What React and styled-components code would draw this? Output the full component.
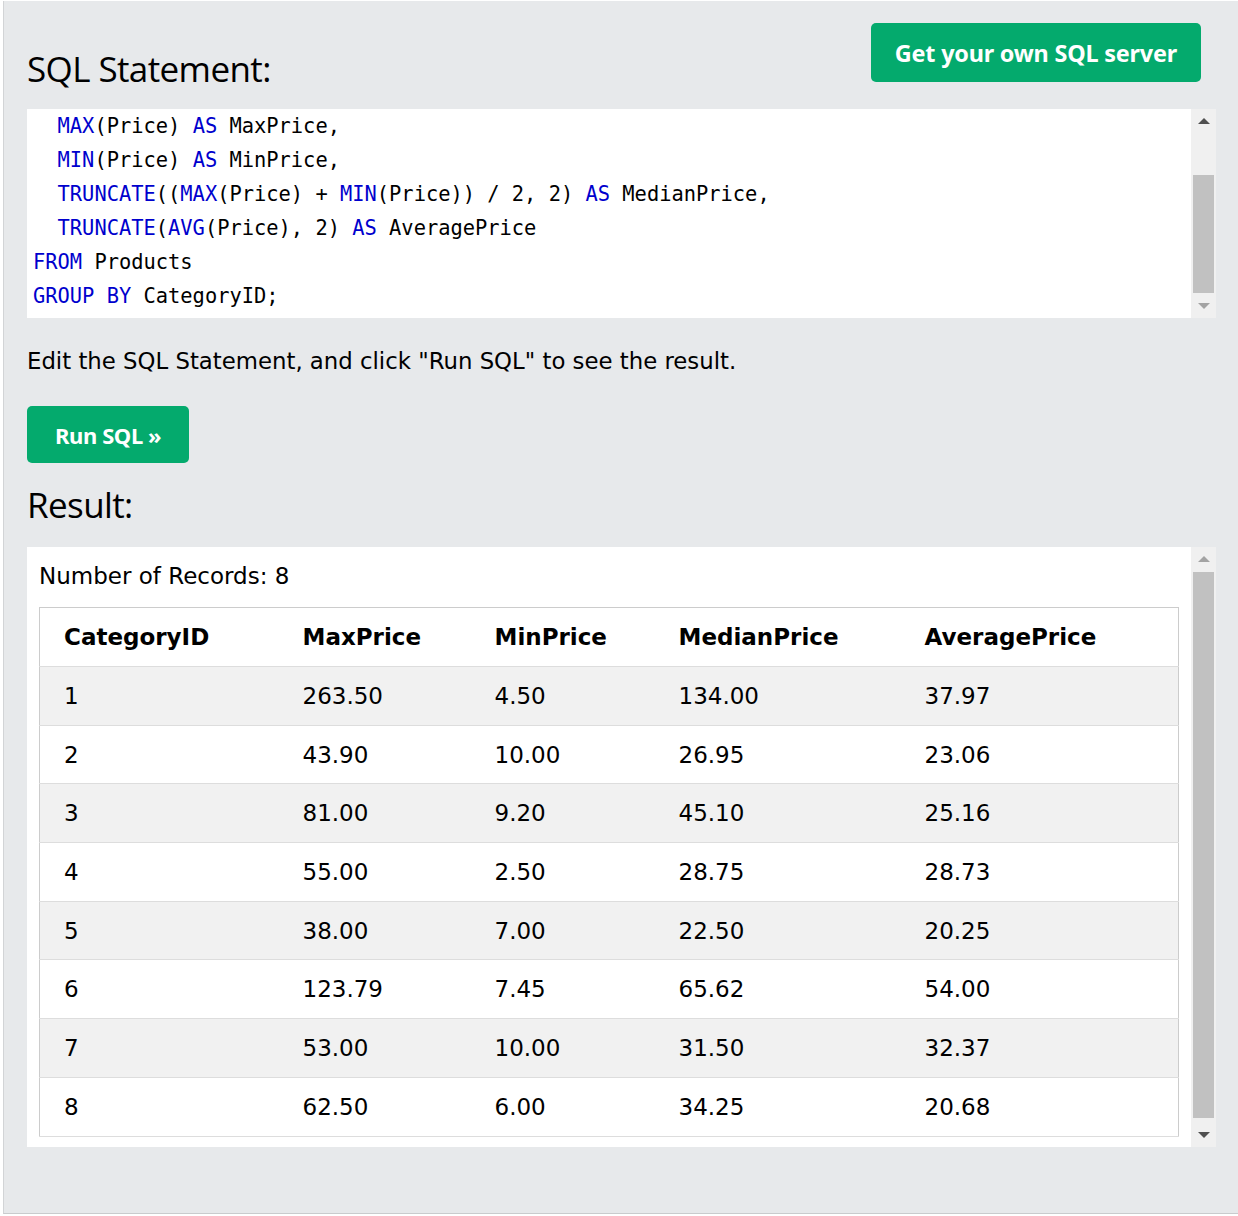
import React from 'react';
import styled, { createGlobalStyle } from 'styled-components';

const GlobalStyle = createGlobalStyle`
  html, body {
    margin: 0;
    padding: 0;
    background: #ffffff;
  }
`;

const Frame = styled.div`
  margin: 1px 0 0 3px;
  height: 1213px;
  box-sizing: border-box;
  background: #e7e9eb;
  border-left: 1px solid #d2d4d6;
  border-bottom: 1px solid #c9cbcd;
  padding: 22px 22px 0 23px;
  font-family: 'Open Sans', 'Noto Sans', sans-serif;
  color: #000;
`;

const TopBar = styled.div`
  display: flex;
  justify-content: space-between;
  align-items: flex-end;
`;

const Heading = styled.h2`
  margin: 0;
  font-weight: 400;
  font-size: 35px;
  line-height: 40px;
  letter-spacing: -0.6px;
  color: #000;
`;

const TopHeading = styled(Heading)`
  margin-bottom: -7px;
`;

const GreenButton = styled.button`
  border: none;
  background: #04aa6d;
  color: #fff;
  font-family: 'Noto Sans', 'Open Sans', sans-serif;
  font-weight: 700;
  font-size: ${(p) => p.size || 23}px;
  letter-spacing: ${(p) => p.ls || -0.4}px;
  border-radius: 5px;
  padding: 0 ${(p) => p.pad || 24}px;
  height: ${(p) => p.h || 59}px;
  margin-right: ${(p) => p.mr || 0}px;
  cursor: pointer;
`;

const Panel = styled.div`
  display: flex;
  background: #fff;
  margin-top: ${(p) => p.mt}px;
  height: ${(p) => p.h}px;
`;

const PanelBody = styled.div`
  flex: 1;
  overflow: hidden;
  padding: ${(p) => p.pad};
`;

const Track = styled.div`
  width: 25px;
  background: #f0f0f0;
  display: flex;
  flex-direction: column;
  align-items: center;
`;

const Arrow = styled.div`
  width: 0;
  height: 0;
  border-left: 6px solid transparent;
  border-right: 6px solid transparent;
  ${(p) =>
    p.dir === 'up'
      ? `border-bottom: 6px solid ${p.c}; margin: 9px 0 0;`
      : `border-top: 6px solid ${p.c}; margin: 0 0 9px;`}
`;

const Thumb = styled.div`
  width: 21px;
  background: #c1c1c1;
  margin-top: ${(p) => p.top}px;
  height: ${(p) => p.h}px;
`;

const Spacer = styled.div`
  flex: 1;
`;

const Code = styled.pre`
  margin: 0;
  padding-left: 6px;
  font-family: 'DejaVu Sans Mono', 'Liberation Mono', monospace;
  font-size: 20.4px;
  line-height: 34px;
  color: #000;
`;

const Kw = styled.span`
  color: #0000cd;
`;

const Note = styled.p`
  margin: 23px 0 0;
  font-family: 'DejaVu Sans', 'Noto Sans', sans-serif;
  font-size: 22.8px;
  line-height: 40px;
  color: #000;
`;

const RunRow = styled.div`
  margin-top: 25px;
`;

const ResultHeading = styled(Heading)`
  margin-top: 22px;
`;

const Records = styled.div`
  font-family: 'DejaVu Sans', 'Noto Sans', sans-serif;
  font-size: 23px;
  line-height: 30px;
  color: #000;
`;

const Table = styled.table`
  margin-top: 16px;
  width: 100%;
  table-layout: fixed;
  border-collapse: collapse;
  border: 1px solid #ccc;
  font-family: 'DejaVu Sans', 'Noto Sans', sans-serif;
  font-size: 23px;
  color: #000;
`;

const Row = styled.tr`
  background: ${(p) => (p.striped ? '#f1f1f1' : '#fff')};
  border-bottom: 1px solid #ddd;
  height: ${(p) => (p.head ? 59 : 58.7)}px;
`;

const Th = styled.th`
  box-sizing: border-box;
  text-align: left;
  font-weight: 700;
  padding: 0 0 0 24px;
  width: ${(p) => (p.w ? `${p.w}px` : 'auto')};
`;

const Td = styled.td`
  padding: 0 0 0 24px;
`;

const columns = [
  { name: 'CategoryID', w: 239 },
  { name: 'MaxPrice', w: 192 },
  { name: 'MinPrice', w: 184 },
  { name: 'MedianPrice', w: 246 },
  { name: 'AveragePrice' },
];

const rows = [
  ['1', '263.50', '4.50', '134.00', '37.97'],
  ['2', '43.90', '10.00', '26.95', '23.06'],
  ['3', '81.00', '9.20', '45.10', '25.16'],
  ['4', '55.00', '2.50', '28.75', '28.73'],
  ['5', '38.00', '7.00', '22.50', '20.25'],
  ['6', '123.79', '7.45', '65.62', '54.00'],
  ['7', '53.00', '10.00', '31.50', '32.37'],
  ['8', '62.50', '6.00', '34.25', '20.68'],
];

function Scrollbar({ top, h }) {
  return (
    <Track>
      <Arrow dir="up" c={top > 20 ? '#505050' : '#a3a3a3'} />
      <Thumb top={top} h={h} />
      <Spacer />
      <Arrow dir="down" c={top > 20 ? '#a3a3a3' : '#505050'} />
    </Track>
  );
}

export default function App() {
  return (
    <>
      <GlobalStyle />
      <Frame>
        <TopBar>
          <TopHeading>SQL Statement:</TopHeading>
          <GreenButton mr={15} size={23.4} ls={-0.2}>Get your own SQL server</GreenButton>
        </TopBar>
        <Panel mt={27} h={209}>
          <PanelBody pad="0">
            <Code>
              {'  '}<Kw>MAX</Kw>(Price) <Kw>AS</Kw> MaxPrice,{'\n'}
              {'  '}<Kw>MIN</Kw>(Price) <Kw>AS</Kw> MinPrice,{'\n'}
              {'  '}<Kw>TRUNCATE</Kw>((<Kw>MAX</Kw>(Price) + <Kw>MIN</Kw>(Price)) / 2, 2) <Kw>AS</Kw> MedianPrice,{'\n'}
              {'  '}<Kw>TRUNCATE</Kw>(<Kw>AVG</Kw>(Price), 2) <Kw>AS</Kw> AveragePrice{'\n'}
              <Kw>FROM</Kw> Products{'\n'}
              <Kw>GROUP</Kw> <Kw>BY</Kw> CategoryID;
            </Code>
          </PanelBody>
          <Scrollbar top={51} h={118} />
        </Panel>
        <Note>Edit the SQL Statement, and click "Run SQL" to see the result.</Note>
        <RunRow>
          <GreenButton size={22} pad={28} h={57}>Run SQL »</GreenButton>
        </RunRow>
        <ResultHeading>Result:</ResultHeading>
        <Panel mt={22} h={600}>
          <PanelBody pad="14px 12px 0 12px">
            <Records>Number of Records: 8</Records>
            <Table>
              <thead>
                <Row head>
                  {columns.map((c) => (
                    <Th key={c.name} w={c.w}>{c.name}</Th>
                  ))}
                </Row>
              </thead>
              <tbody>
                {rows.map((r, i) => (
                  <Row key={r[0]} striped={i % 2 === 0}>
                    {r.map((v, j) => (
                      <Td key={j}>{v}</Td>
                    ))}
                  </Row>
                ))}
              </tbody>
            </Table>
          </PanelBody>
          <Scrollbar top={10} h={546} />
        </Panel>
      </Frame>
    </>
  );
}
